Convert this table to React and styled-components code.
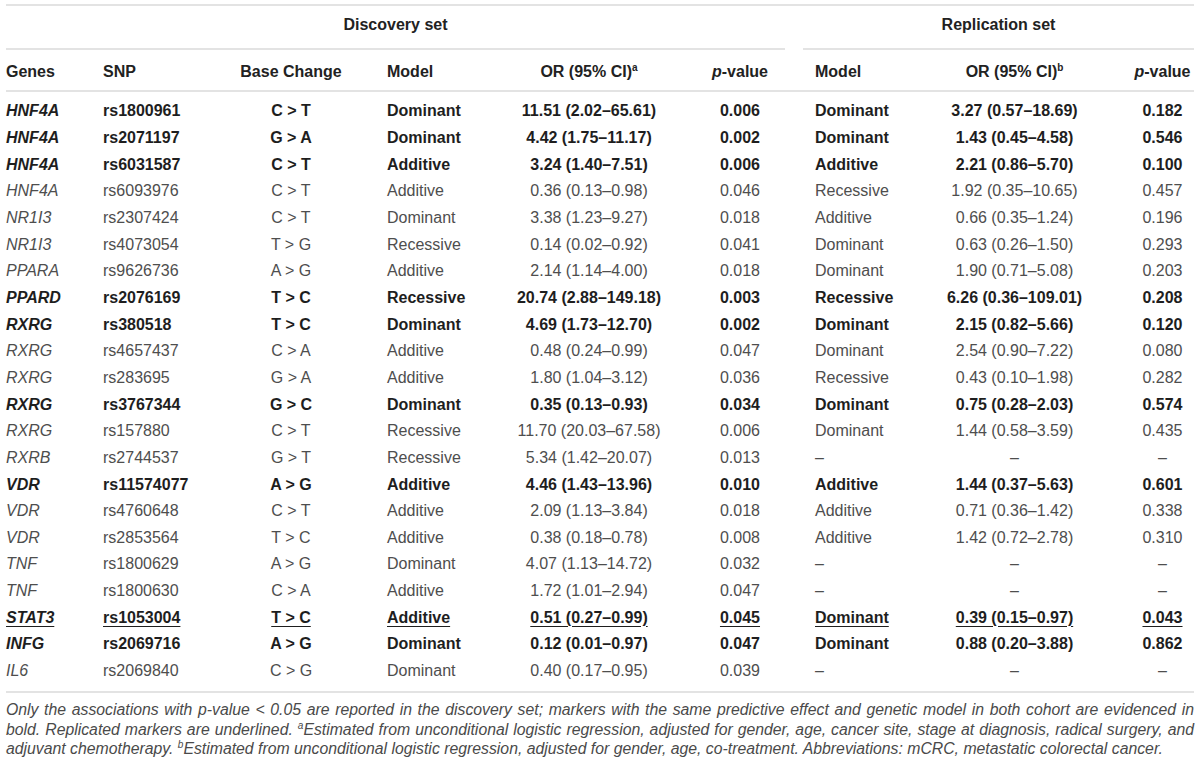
import React from "react";
import styled, { createGlobalStyle } from "styled-components";

const GlobalStyle = createGlobalStyle`
  html, body {
    margin: 0;
    padding: 0;
    background: #fff;
  }
  body {
    font-family: "Liberation Sans", Arial, sans-serif;
    color: #1e1e1e;
  }
`;

const COLUMNS = "97px 92px 192px 114px 176px 126px 95px 233px 63px";

const Page = styled.div`
  width: 1188px;
  padding: 4px 6px 0 6px;
`;

const Table = styled.div`
  border-top: 2px solid #e3e3e3;
`;

const GroupRow = styled.div`
  display: grid;
  grid-template-columns: ${COLUMNS};
`;

const Group = styled.div`
  grid-column: ${p => p.$span};
  margin-right: ${p => p.$gap || 0}px;
  padding: 10px 0 14px;
  line-height: 18px;
  font-size: 16px;
  font-weight: 700;
  text-align: center;
  color: #222;
  border-bottom: 2px solid #e3e3e3;
`;

const HeadRow = styled.div`
  display: grid;
  grid-template-columns: ${COLUMNS};
  padding: 13px 0 9px;
  border-bottom: 2px solid #e3e3e3;
`;

const HeadCell = styled.div`
  font-size: 16px;
  line-height: 18px;
  font-weight: 700;
  color: #222;
  white-space: nowrap;
  text-align: ${p => p.$align || "left"};
  padding-left: ${p => p.$pad || 0}px;
`;

const Sup = styled.sup`
  font-size: 10px;
  line-height: 0;
  vertical-align: 6px;
`;

const Body = styled.div`
  padding: 6px 0 7px;
  border-bottom: 2px solid #e3e3e3;
`;

const Row = styled.div`
  display: grid;
  grid-template-columns: ${COLUMNS};
  height: 26.67px;
  align-items: center;
  font-size: 16px;
  font-weight: ${p => (p.$strong ? 700 : 400)};
  color: ${p => (p.$strong ? "#1e1e1e" : "#4e4e4e")};
`;

const Cell = styled.div`
  white-space: nowrap;
  text-align: ${p => p.$align || "left"};
  padding-left: ${p => p.$pad || 0}px;
  font-style: ${p => (p.$italic ? "italic" : "normal")};
`;

const Text = styled.span`
  text-decoration: ${p => (p.$under ? "underline" : "none")};
  text-decoration-thickness: 1px;
  text-underline-offset: 3px;
`;

const Note = styled.div`
  padding-top: 7px;
  font-size: 15.8px;
  line-height: 19.5px;
  font-style: italic;
  color: #4a4a4a;
`;

const NoteLine = styled.div`
  text-align: ${p => (p.$fill ? "justify" : "left")};
  text-align-last: ${p => (p.$fill ? "justify" : "auto")};
`;

const NoteSup = styled.sup`
  font-size: 10px;
  line-height: 0;
  vertical-align: 6px;
`;

const rows = [
  ["HNF4A", "rs1800961", "C > T", "Dominant", "11.51 (2.02–65.61)", "0.006", "Dominant", "3.27 (0.57–18.69)", "0.182", 1],
  ["HNF4A", "rs2071197", "G > A", "Dominant", "4.42 (1.75–11.17)", "0.002", "Dominant", "1.43 (0.45–4.58)", "0.546", 1],
  ["HNF4A", "rs6031587", "C > T", "Additive", "3.24 (1.40–7.51)", "0.006", "Additive", "2.21 (0.86–5.70)", "0.100", 1],
  ["HNF4A", "rs6093976", "C > T", "Additive", "0.36 (0.13–0.98)", "0.046", "Recessive", "1.92 (0.35–10.65)", "0.457", 0],
  ["NR1I3", "rs2307424", "C > T", "Dominant", "3.38 (1.23–9.27)", "0.018", "Additive", "0.66 (0.35–1.24)", "0.196", 0],
  ["NR1I3", "rs4073054", "T > G", "Recessive", "0.14 (0.02–0.92)", "0.041", "Dominant", "0.63 (0.26–1.50)", "0.293", 0],
  ["PPARA", "rs9626736", "A > G", "Additive", "2.14 (1.14–4.00)", "0.018", "Dominant", "1.90 (0.71–5.08)", "0.203", 0],
  ["PPARD", "rs2076169", "T > C", "Recessive", "20.74 (2.88–149.18)", "0.003", "Recessive", "6.26 (0.36–109.01)", "0.208", 1],
  ["RXRG", "rs380518", "T > C", "Dominant", "4.69 (1.73–12.70)", "0.002", "Dominant", "2.15 (0.82–5.66)", "0.120", 1],
  ["RXRG", "rs4657437", "C > A", "Additive", "0.48 (0.24–0.99)", "0.047", "Dominant", "2.54 (0.90–7.22)", "0.080", 0],
  ["RXRG", "rs283695", "G > A", "Additive", "1.80 (1.04–3.12)", "0.036", "Recessive", "0.43 (0.10–1.98)", "0.282", 0],
  ["RXRG", "rs3767344", "G > C", "Dominant", "0.35 (0.13–0.93)", "0.034", "Dominant", "0.75 (0.28–2.03)", "0.574", 1],
  ["RXRG", "rs157880", "C > T", "Recessive", "11.70 (20.03–67.58)", "0.006", "Dominant", "1.44 (0.58–3.59)", "0.435", 0],
  ["RXRB", "rs2744537", "G > T", "Recessive", "5.34 (1.42–20.07)", "0.013", "–", "–", "–", 0],
  ["VDR", "rs11574077", "A > G", "Additive", "4.46 (1.43–13.96)", "0.010", "Additive", "1.44 (0.37–5.63)", "0.601", 1],
  ["VDR", "rs4760648", "C > T", "Additive", "2.09 (1.13–3.84)", "0.018", "Additive", "0.71 (0.36–1.42)", "0.338", 0],
  ["VDR", "rs2853564", "T > C", "Additive", "0.38 (0.18–0.78)", "0.008", "Additive", "1.42 (0.72–2.78)", "0.310", 0],
  ["TNF", "rs1800629", "A > G", "Dominant", "4.07 (1.13–14.72)", "0.032", "–", "–", "–", 0],
  ["TNF", "rs1800630", "C > A", "Additive", "1.72 (1.01–2.94)", "0.047", "–", "–", "–", 0],
  ["STAT3", "rs1053004", "T > C", "Additive", "0.51 (0.27–0.99)", "0.045", "Dominant", "0.39 (0.15–0.97)", "0.043", 2],
  ["INFG", "rs2069716", "A > G", "Dominant", "0.12 (0.01–0.97)", "0.047", "Dominant", "0.88 (0.20–3.88)", "0.862", 1],
  ["IL6", "rs2069840", "C > G", "Dominant", "0.40 (0.17–0.95)", "0.039", "–", "–", "–", 0],
];

// per column: alignment, left padding, italic
const cols = [
  { align: "left", italic: true },
  { align: "left" },
  { align: "center" },
  { align: "left" },
  { align: "center" },
  { align: "center" },
  { align: "left", pad: 12 },
  { align: "center" },
  { align: "center" },
];

const PValue = () => (
  <>
    <i>p</i>-value
  </>
);

export default function App() {
  return (
    <Page>
      <GlobalStyle />
      <Table>
        <GroupRow>
          <Group $span="1 / 7" $gap={18}>Discovery set</Group>
          <Group $span="7 / 10">Replication set</Group>
        </GroupRow>
        <HeadRow>
          <HeadCell>Genes</HeadCell>
          <HeadCell>SNP</HeadCell>
          <HeadCell $align="center">Base Change</HeadCell>
          <HeadCell>Model</HeadCell>
          <HeadCell $align="center">OR (95% CI)<Sup>a</Sup></HeadCell>
          <HeadCell $align="center"><PValue /></HeadCell>
          <HeadCell $pad={12}>Model</HeadCell>
          <HeadCell $align="center">OR (95% CI)<Sup>b</Sup></HeadCell>
          <HeadCell $align="center"><PValue /></HeadCell>
        </HeadRow>
        <Body>
          {rows.map((r, i) => (
            <Row key={i} $strong={r[9] > 0}>
              {r.slice(0, 9).map((v, j) => (
                <Cell key={j} $align={cols[j].align} $pad={cols[j].pad} $italic={cols[j].italic}>
                  <Text $under={r[9] === 2}>{v}</Text>
                </Cell>
              ))}
            </Row>
          ))}
        </Body>
      </Table>
      <Note>
        <NoteLine $fill>
          Only the associations with p-value &lt; 0.05 are reported in the discovery set; markers with the same predictive effect and genetic model in both cohort are evidenced in
        </NoteLine>
        <NoteLine $fill>
          bold. Replicated markers are underlined. <NoteSup>a</NoteSup>Estimated from unconditional logistic regression, adjusted for gender, age, cancer site, stage at diagnosis, radical surgery, and
        </NoteLine>
        <NoteLine>
          adjuvant chemotherapy. <NoteSup>b</NoteSup>Estimated from unconditional logistic regression, adjusted for gender, age, co-treatment. Abbreviations: mCRC, metastatic colorectal cancer.
        </NoteLine>
      </Note>
    </Page>
  );
}
